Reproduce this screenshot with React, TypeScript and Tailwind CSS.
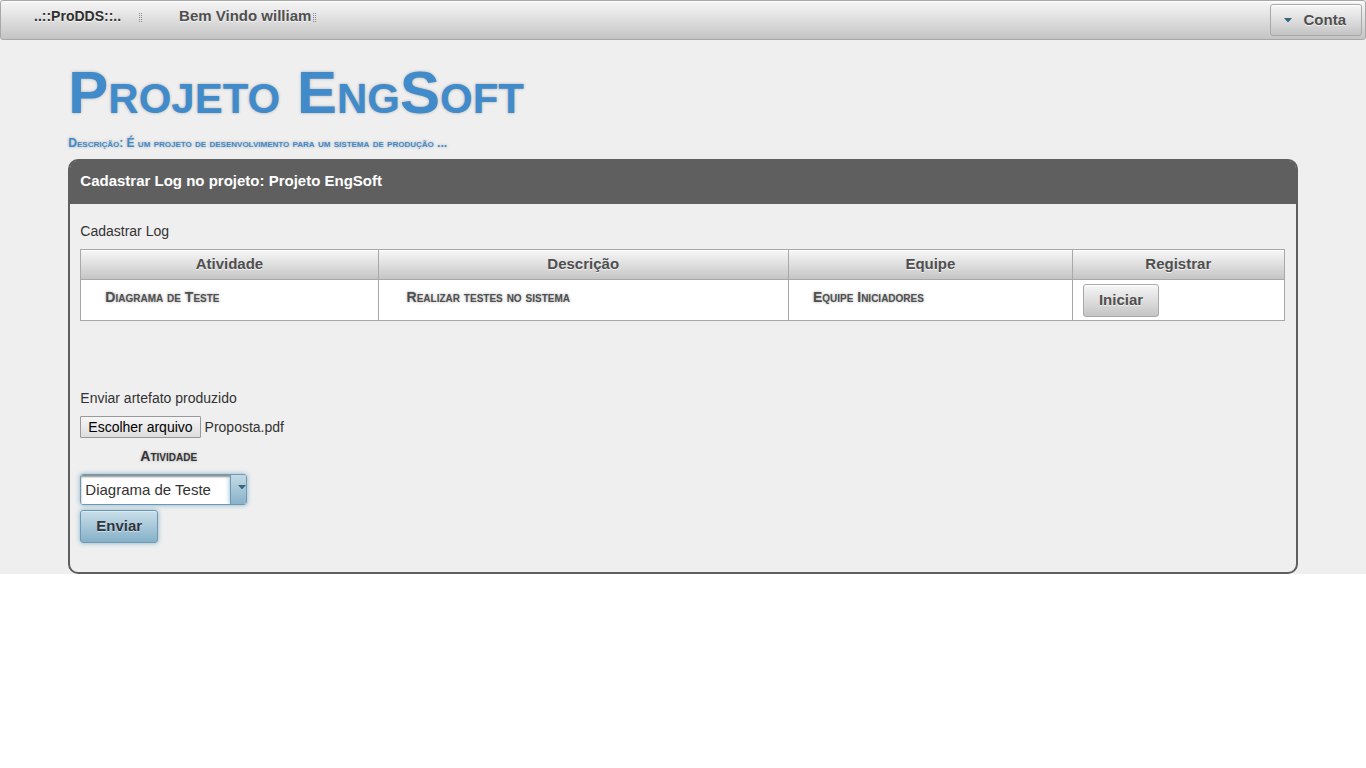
import React from "react";

const raised =
  "border border-[#a8a8a8] bg-linear-to-b from-[#f6f6f6] from-0% via-[#dedede] via-50% to-[#c4c4c4] to-100% shadow-[inset_0_1px_0_#ffffff] text-[#4f4f4f] font-bold [text-shadow:0_1px_0_rgba(255,255,255,0.7)]";

const smallCaps =
  "font-bold [font-variant:small-caps] [text-shadow:0_0_3px_#aaaaaa]";

function Grip() {
  return (
    <svg width="4" height="10" viewBox="0 0 4 10" aria-hidden="true" shapeRendering="crispEdges">
      {[0, 2, 4, 6, 8].map((y) => (
        <g key={y} fill="#8a8a8a">
          <rect x="0" y={y} width="1" height="1" />
          <rect x="2" y={y} width="1" height="1" />
        </g>
      ))}
    </svg>
  );
}

function Caret() {
  return (
    <svg width="8" height="4" viewBox="0 0 8 4" aria-hidden="true">
      <path d="M0 0h8L4.500 4h-1z" fill="#38667f" />
    </svg>
  );
}

const rows = [
  {
    atividade: "Diagrama de Teste",
    descricao: "Realizar testes no sistema",
    equipe: "Equipe Iniciadores",
  },
];

export default function App() {
  return (
    <div className="bg-[#efefef] font-['Liberation_Sans',Arial,sans-serif] text-sm leading-5 text-[#333333]">
      <header className={`flex h-10 items-start justify-between rounded-[3px] pr-1 pt-[3px] ${raised}`}>
        <div className="flex items-center pl-[33px] pt-[2px]">
          <a href="#" className="text-[#2f2f2f]">..::ProDDS::..</a>
          <span className="ml-[18px] mr-9 pt-1">
            <Grip />
          </span>
          <span className="text-[15px]">Bem Vindo william</span>
          <span className="ml-[2px] pt-1">
            <Grip />
          </span>
        </div>
        <button type="button" className={`-mr-px flex h-8 items-center gap-3 rounded-[3px] pl-[13px] pr-[15px] text-[15px] ${raised}`}>
          <Caret />
          Conta
        </button>
      </header>

      <main className="mx-[5%]">
        <h1 className={`pt-[18px] text-[60px] leading-[70px] text-[#428bca] ${smallCaps}`}>
          Projeto EngSoft
        </h1>
        <p className={`pb-[6px] pt-[5px] text-[12px] text-[#428bca] ${smallCaps}`}>
          Descrição: É um projeto de desenvolvimento para um sistema de produção ...
        </p>

        <section className="rounded-[10px] border-2 border-[#5f5f5f]">
          <h2 className="rounded-t-[7px] bg-[#5f5f5f] px-[10px] pb-[13px] pt-[10px] text-[15px] font-bold text-white">
            Cadastrar Log no projeto: Projeto EngSoft
          </h2>
          <div className="pb-[29px] pl-[10px] pr-[11px] pt-[17px]">
            <p>Cadastrar Log</p>
            <table className="mt-2 w-full table-fixed border-collapse">
              <colgroup>
                <col className="w-[24.7%]" />
                <col className="w-[34.1%]" />
                <col className="w-[23.6%]" />
                <col className="w-[17.6%]" />
              </colgroup>
              <thead>
                <tr className="h-[30px]">
                  <th className={`pb-[2px] text-[15px] ${raised}`}>Atividade</th>
                  <th className={`pb-[2px] text-[15px] ${raised}`}>Descrição</th>
                  <th className={`pb-[2px] text-[15px] ${raised}`}>Equipe</th>
                  <th className={`pb-[2px] text-[15px] ${raised}`}>Registrar</th>
                </tr>
              </thead>
              <tbody>
                {rows.map((row) => (
                  <tr key={row.atividade} className="h-[41px] bg-white align-top text-[#4f4f4f]">
                    <td className={`border border-[#a8a8a8] pl-6 pt-[7px] ${smallCaps}`}>{row.atividade}</td>
                    <td className={`border border-[#a8a8a8] pl-7 pt-[7px] ${smallCaps}`}>{row.descricao}</td>
                    <td className={`border border-[#a8a8a8] pl-6 pt-[7px] ${smallCaps}`}>{row.equipe}</td>
                    <td className="border border-[#a8a8a8] px-[10px] pt-1">
                      <button type="button" className={`block h-[33px] rounded-[3px] px-[15px] pb-[2px] text-[15px] ${raised}`}>
                        Iniciar
                      </button>
                    </td>
                  </tr>
                ))}
              </tbody>
            </table>

            <form className="mt-[67px]" onSubmit={(e) => e.preventDefault()}>
              <p>Enviar artefato produzido</p>
              <div className="mt-2 flex items-center gap-1">
                <label
                  htmlFor="arquivo"
                  className="flex h-[22px] items-center rounded-[1px] border border-[#999999] bg-linear-to-b from-[#f6f6f6] to-[#dddddd] px-[7px] text-black"
                >
                  Escolher arquivo
                </label>
                <input id="arquivo" type="file" className="sr-only" />
                <span>Proposta.pdf</span>
              </div>
              <label htmlFor="atividade" className={`mt-2 block pl-[60px] ${smallCaps}`}>
                Atividade
              </label>
              <div className="mt-2 grid h-[31px] w-[167px] grid-cols-[1fr_16px] overflow-hidden rounded-[3px] border border-[#6c9ab3] shadow-[0_0_5px_#85b2cb]">
                <select
                  id="atividade"
                  className="col-span-2 col-start-1 row-start-1 appearance-none bg-white pl-1 text-[15px] text-[#333333] shadow-[inset_0_2px_2px_#8f8f8f] outline-none"
                >
                  <option>Diagrama de Teste</option>
                </select>
                <span className="pointer-events-none z-10 col-start-2 row-start-1 flex justify-end border-l border-[#6c9ab3] bg-linear-to-b from-[#c4dae5] to-[#88b2c9] pt-[10px] shadow-[0_0_5px_#85b2cb]">
                  <Caret />
                </span>
              </div>
              <button
                type="submit"
                className="mt-[5px] block h-[33px] rounded-[3px] border border-[#6c9ab3] bg-linear-to-b from-[#c9dfe9] to-[#86b0c8] px-[15px] pb-[2px] text-[15px] font-bold text-[#2f3440] shadow-[0_0_5px_#85b2cb,inset_0_1px_0_#dceaf1] [text-shadow:0_1px_0_rgba(255,255,255,0.5)]"
              >
                Enviar
              </button>
            </form>
          </div>
        </section>
      </main>
    </div>
  );
}
